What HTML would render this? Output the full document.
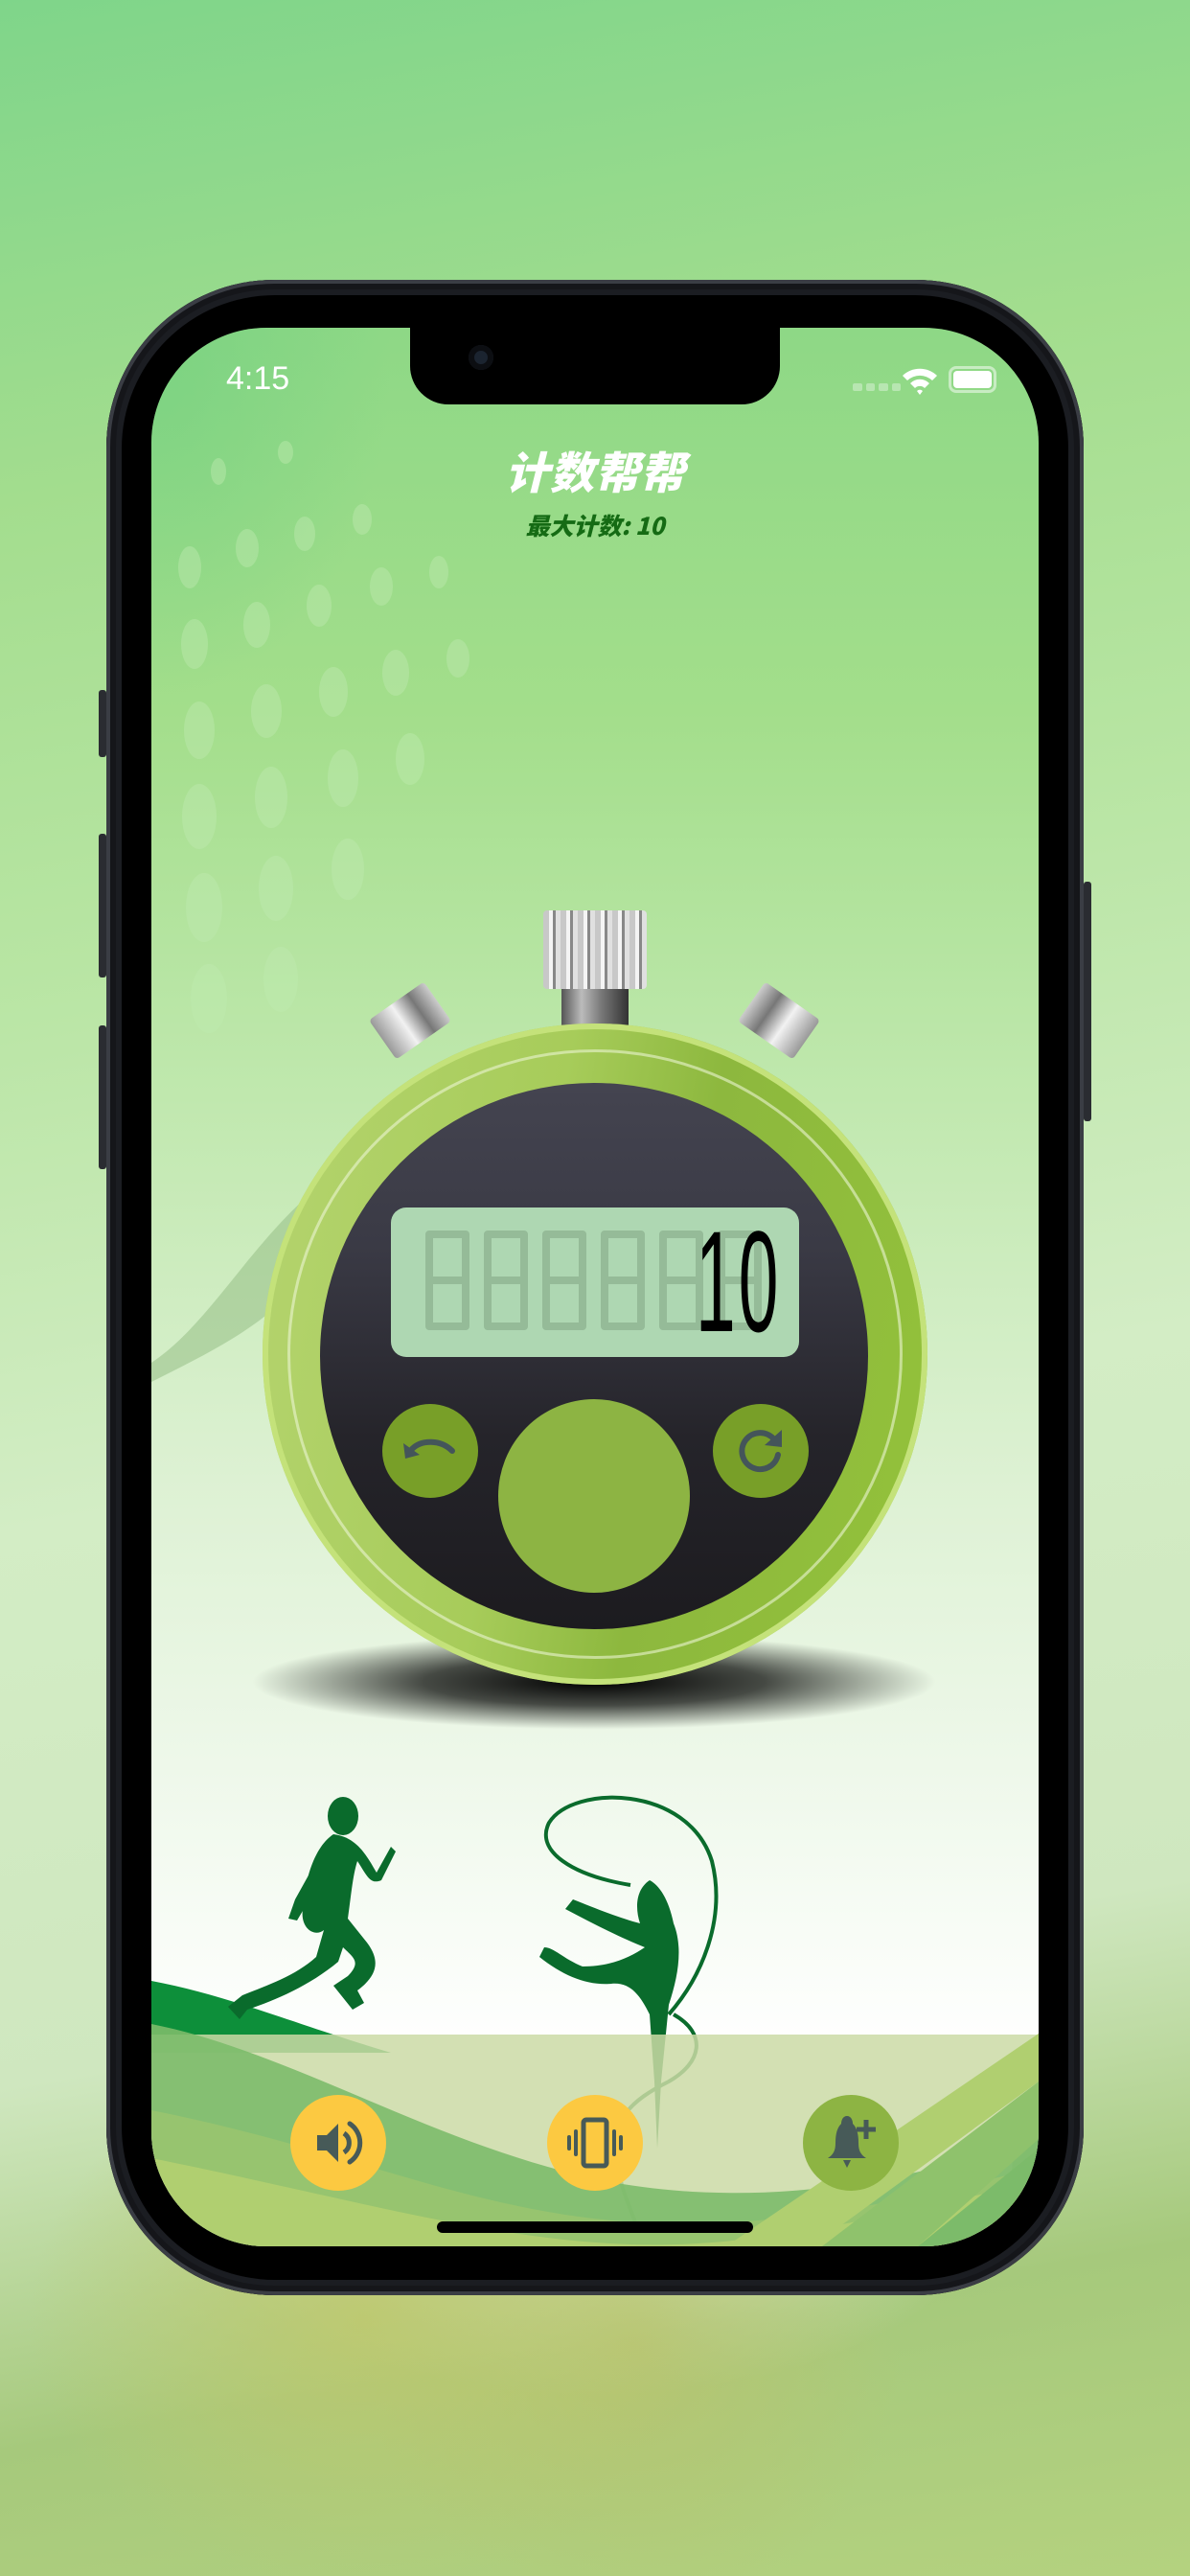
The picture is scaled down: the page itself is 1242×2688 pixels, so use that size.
<!DOCTYPE html>
<html><head><meta charset="utf-8">
<style>
html,body{margin:0;padding:0}
body{width:1242px;height:2688px;position:relative;overflow:hidden;
background:
radial-gradient(ellipse 500px 400px at 380px 2420px, rgba(190,200,110,.9), transparent 70%),
radial-gradient(ellipse 400px 400px at 660px 2450px, rgba(185,195,110,.8), transparent 70%),
radial-gradient(ellipse 600px 300px at 620px 2290px, rgba(230,240,220,.9), transparent 70%),
linear-gradient(170deg,#7fd58a 0%,#a3dd8e 18%,#b8e5a3 35%,#d3edc5 55%,#cfe7bf 75%,#a6c97c 88%,#b4d27f 100%);
font-family:"Liberation Sans","Noto Sans CJK SC",sans-serif}
.abs{position:absolute}
.phone{left:111px;top:292px;width:1020px;height:2103px;border-radius:175px;background:#1b1d22;box-shadow:inset 0 0 0 4px #3a3d44, inset 0 0 0 10px #15161a}
.bezel{left:127px;top:308px;width:988px;height:2071px;border-radius:160px;background:#000}
.screen{left:158px;top:342px;width:926px;height:2002px;border-radius:120px;overflow:hidden;
background:linear-gradient(180deg,#8ed886 0%,#a3de8b 20%,#c0e8ae 40%,#ddf1d3 60%,#eef8ea 75%,#ffffff 90%)}
.notch{left:270px;top:-2px;width:386px;height:82px;background:#000;border-radius:0 0 40px 40px}
</style></head><body>
<div class="abs phone"></div>
<div class="abs" style="left:103px;top:720px;width:8px;height:70px;background:#2a2c31;border-radius:3px"></div>
<div class="abs" style="left:103px;top:870px;width:8px;height:150px;background:#2a2c31;border-radius:3px"></div>
<div class="abs" style="left:103px;top:1070px;width:8px;height:150px;background:#2a2c31;border-radius:3px"></div>
<div class="abs" style="left:1131px;top:920px;width:8px;height:250px;background:#2a2c31;border-radius:3px"></div>
<div class="abs bezel"></div>
<div class="abs screen">
 <svg class="abs" style="left:0;top:0" width="926" height="2002">
  <defs>
   <radialGradient id="dots" cx="0" cy="0.05" r="0.5"><stop offset="0" stop-color="#6fcf7f" stop-opacity=".6"/><stop offset="1" stop-color="#6fcf7f" stop-opacity="0"/></radialGradient>
  </defs>
  <rect width="500" height="700" fill="url(#dots)"/>
  <g fill="#bfeab0" opacity=".45">
   <ellipse cx="40" cy="250" rx="12" ry="22"/><ellipse cx="100" cy="230" rx="12" ry="20"/><ellipse cx="160" cy="215" rx="11" ry="18"/><ellipse cx="220" cy="200" rx="10" ry="16"/>
   <ellipse cx="45" cy="330" rx="14" ry="26"/><ellipse cx="110" cy="310" rx="14" ry="24"/><ellipse cx="175" cy="290" rx="13" ry="22"/><ellipse cx="240" cy="270" rx="12" ry="20"/><ellipse cx="300" cy="255" rx="10" ry="17"/>
   <ellipse cx="50" cy="420" rx="16" ry="30"/><ellipse cx="120" cy="400" rx="16" ry="28"/><ellipse cx="190" cy="380" rx="15" ry="26"/><ellipse cx="255" cy="360" rx="14" ry="24"/><ellipse cx="320" cy="345" rx="12" ry="20"/>
   <ellipse cx="50" cy="510" rx="18" ry="34"/><ellipse cx="125" cy="490" rx="17" ry="32"/><ellipse cx="200" cy="470" rx="16" ry="30"/><ellipse cx="270" cy="450" rx="15" ry="27"/>
   <ellipse cx="55" cy="605" rx="19" ry="36"/><ellipse cx="130" cy="585" rx="18" ry="34"/><ellipse cx="205" cy="565" rx="17" ry="32"/>
   <ellipse cx="60" cy="700" rx="19" ry="36"/><ellipse cx="135" cy="680" rx="18" ry="34"/><ellipse cx="70" cy="150" rx="8" ry="14"/><ellipse cx="140" cy="130" rx="8" ry="12"/>
  </g>
  <path d="M0 1080 C60 1040 100 960 170 900 C200 880 230 870 250 880 C210 900 180 950 150 1000 C120 1040 60 1070 0 1100Z" fill="#8fb980" opacity=".5"/>
  <path d="M0 1725 C80 1740 150 1770 250 1800 L0 1800Z" fill="#0d8f3a"/>
  <!-- runner -->
  <g fill="#0a6b2c">
   <ellipse cx="200" cy="1553" rx="16" ry="20"/>
   <path d="M190 1572 C170 1585 160 1620 158 1650 C155 1670 170 1680 180 1672 L172 1700 C150 1720 120 1730 95 1740 L80 1752 L92 1765 L100 1755 C130 1745 165 1730 195 1705 L200 1690 C210 1700 220 1705 205 1720 L190 1730 L210 1755 L222 1748 L215 1735 C235 1720 240 1705 225 1685 L205 1660 C208 1640 210 1615 215 1600 C225 1615 228 1625 240 1620 L255 1590 L250 1585 L235 1612 C225 1595 215 1575 190 1572Z"/>
   <path d="M175 1595 L150 1640 L143 1660 L152 1662 L165 1640 L185 1610Z"/>
  </g>
  <!-- gymnast -->
  <g fill="none" stroke="#0a6b2c" stroke-width="4">
   <path d="M500 1625 C440 1615 400 1590 415 1560 C440 1520 560 1520 585 1600 C600 1660 575 1720 540 1760"/>
   <path d="M545 1760 C580 1780 575 1810 540 1830 C500 1850 480 1870 485 1910 C490 1950 510 1980 515 2010"/>
  </g>
  <path d="M520 1620 C505 1630 505 1650 510 1665 C490 1660 460 1648 440 1640 L432 1650 C460 1665 490 1680 515 1690 C500 1700 480 1710 450 1710 C430 1702 420 1690 410 1690 L405 1700 C430 1720 455 1730 480 1728 C500 1726 510 1740 520 1760 L525 1830 L528 1900 L532 1830 L540 1750 C550 1720 555 1690 545 1665 C540 1640 530 1625 520 1620Z" fill="#0a6b2c"/>
  <path d="M900 1900 C880 1880 910 1860 926 1860 L926 2010 L890 2010 Z" fill="#0a6b2c"/>
  <!-- bottom panel -->
  <rect x="0" y="1781" width="926" height="221" fill="#cbdba6" opacity=".85"/>
  <path d="M0 1770 C150 1800 300 1900 480 1935 C650 1965 800 1930 926 1890 L926 2002 L0 2002Z" fill="#7cbb6a" opacity=".9"/>
  <path d="M0 1860 C200 1900 320 1960 480 1975 C650 1990 800 1950 926 1920 L926 2002 L0 2002Z" fill="#97c46f"/>
  <path d="M0 1910 C200 1950 350 1995 500 2000 C650 2005 800 1960 926 1935 L926 2002 L0 2002Z" fill="#b0cf70"/>
  <path d="M0 1990 C200 2020 350 2060 500 2065 C680 2060 820 2010 926 1980 L926 2002 L0 2002Z" fill="#bedb82"/>
  <path d="M600 2002 L926 1780 L926 1830 L690 2002Z" fill="#b0cf70"/>
  <path d="M700 2002 L926 1830 L926 1890 L800 2002Z" fill="#8fc26c"/>
  <path d="M800 2002 L926 1900 L926 1960 L860 2002Z" fill="#7cbb6a"/>
  <path d="M860 2002 L926 1960 L926 2002Z" fill="#cbdba6"/>
 </svg>
 <div class="abs notch"></div>
 <div class="abs" style="left:331px;top:18px;width:26px;height:26px;border-radius:50%;background:#1b2430;box-shadow:inset 0 0 0 6px #0c0e12"></div>
 <div class="abs" style="left:78px;top:34px;color:#fff;font-size:34px">4:15</div>
 <div class="abs" style="left:732px;top:58px;width:50px;height:8px;display:flex;gap:4px"><i style="flex:1;background:rgba(255,255,255,.35);border-radius:2px"></i><i style="flex:1;background:rgba(255,255,255,.35);border-radius:2px"></i><i style="flex:1;background:rgba(255,255,255,.35);border-radius:2px"></i><i style="flex:1;background:rgba(255,255,255,.35);border-radius:2px"></i></div>
 <svg class="abs" style="left:782px;top:40px" width="40" height="30" viewBox="0 0 40 30"><path d="M2 10 A26 26 0 0 1 38 10 L33 15 A19 19 0 0 0 7 15Z M10 18 A14 14 0 0 1 30 18 L25 23 A7 7 0 0 0 15 23Z M17 26 L20 30 L23 26 A4 4 0 0 0 17 26Z" fill="#fff"/></svg>
 <div class="abs" style="left:832px;top:40px;width:44px;height:22px;border:3px solid rgba(255,255,255,.5);border-radius:8px"><div style="margin:2px;height:18px;background:#fff;border-radius:4px"></div></div>
 <div class="abs" style="left:0;width:926px;top:116px;text-align:center;color:#fff;font-size:46px;font-weight:900;font-style:italic;font-family:'Noto Sans CJK SC',sans-serif;letter-spacing:1px">计数帮帮</div>
 <div class="abs" style="left:0;width:926px;top:188px;text-align:center;color:#156b14;font-size:25px;font-weight:900;font-style:italic;font-family:'Noto Sans CJK SC',sans-serif">最大计数: 10</div>
</div>

<!-- stopwatch -->
<div class="abs" style="left:260px;top:1705px;width:720px;height:100px;border-radius:50%;background:radial-gradient(ellipse at center,#000 0%,rgba(0,0,0,.7) 35%,rgba(0,0,0,0) 70%)"></div>
<div class="abs" style="left:586px;top:1025px;width:70px;height:45px;background:linear-gradient(90deg,#555,#bbb 30%,#777 60%,#333);"></div>
<div class="abs" style="left:567px;top:950px;width:108px;height:82px;background:repeating-linear-gradient(90deg,#c8c8c8 0 6px,#f4f4f4 6px 10px,#888 10px 13px,#e0e0e0 13px 18px);border-radius:4px"></div>
<div class="abs" style="left:393px;top:1040px;width:70px;height:50px;transform:rotate(-35deg);background:linear-gradient(90deg,#999,#f2f2f2 40%,#777 70%,#ccc);border-radius:4px"></div>
<div class="abs" style="left:778px;top:1040px;width:70px;height:50px;transform:rotate(35deg);background:linear-gradient(90deg,#ccc,#777 30%,#f2f2f2 60%,#999);border-radius:4px"></div>
<div class="abs" style="left:274px;top:1068px;width:694px;height:690px;border-radius:50%;background:linear-gradient(100deg,#b5d46f 0%,#a7cc5a 40%,#8db83e 60%,#93c23a 100%);box-shadow:inset 0 0 0 6px #c4e27a"></div>
<div class="abs" style="left:300px;top:1095px;width:642px;height:636px;border-radius:50%;border:3px solid rgba(235,245,210,.6);box-sizing:border-box"></div>
<div class="abs" style="left:334px;top:1130px;width:572px;height:570px;border-radius:50%;background:linear-gradient(180deg,#444450 0%,#3a3a45 30%,#25242a 65%,#1c1b1f 100%)"></div>
<div class="abs" style="left:408px;top:1260px;width:426px;height:156px;border-radius:16px;background:#aed7b2;overflow:hidden">
 <svg class="abs" style="left:0;top:0" width="426" height="156">
  <g fill="none" stroke="#95bb98" stroke-width="8" stroke-linejoin="round">
   <path d="M40 28 h38 v48 h-38z M40 76 v48 h38 v-48"/>
   <path d="M101 28 h38 v48 h-38z M101 76 v48 h38 v-48"/>
   <path d="M162 28 h38 v48 h-38z M162 76 v48 h38 v-48"/>
   <path d="M223 28 h38 v48 h-38z M223 76 v48 h38 v-48"/>
   <path d="M284 28 h38 v48 h-38z M284 76 v48 h38 v-48"/>
   <path d="M345 28 h38 v48 h-38z M345 76 v48 h38 v-48"/>
  </g>
 </svg>
 <div class="abs" style="left:318px;top:2px;font-family:'Liberation Sans',sans-serif;font-size:150px;line-height:150px;color:#000;transform:scaleX(.5);transform-origin:0 0;letter-spacing:6px">10</div>
</div>
<div class="abs" style="left:399px;top:1465px;width:100px;height:98px;border-radius:50%;background:#789f28"></div>
<svg class="abs" style="left:418px;top:1490px" width="62" height="40" viewBox="0 0 62 40"><path d="M12 22 C22 12 42 12 54 24" fill="none" stroke="#44555a" stroke-width="6" stroke-linecap="round"/><path d="M3 16 L5 32 L20 28Z" fill="#44555a"/></svg>
<div class="abs" style="left:744px;top:1465px;width:100px;height:98px;border-radius:50%;background:#789f28"></div>
<svg class="abs" style="left:768px;top:1488px" width="52" height="52" viewBox="0 0 52 52"><path d="M44 30 A19 19 0 1 1 40 14" fill="none" stroke="#44555a" stroke-width="6" stroke-linecap="round"/><path d="M48 4 L48 22 L30 20Z" fill="#44555a"/></svg>
<div class="abs" style="left:520px;top:1460px;width:200px;height:202px;border-radius:50%;background:#8db443"></div>

<div class="abs" style="left:303px;top:2186px;width:100px;height:100px;border-radius:50%;background:#fcc941"></div>
<svg class="abs" style="left:323px;top:2206px" width="60" height="60" viewBox="0 0 60 60"><path d="M8 22 H18 L30 10 V50 L18 38 H8Z" fill="#475a58"/><path d="M36 20 A12 12 0 0 1 36 40" fill="none" stroke="#475a58" stroke-width="5"/><path d="M42 10 A24 24 0 0 1 42 50" fill="none" stroke="#475a58" stroke-width="5" stroke-linecap="round"/></svg>
<div class="abs" style="left:571px;top:2186px;width:100px;height:100px;border-radius:50%;background:#fcc941"></div>
<svg class="abs" style="left:591px;top:2206px" width="60" height="60" viewBox="0 0 60 60"><rect x="18" y="6" width="24" height="48" rx="3" fill="none" stroke="#475a58" stroke-width="5"/><path d="M10 18 V42 M50 18 V42 M3 24 V36 M57 24 V36" stroke="#475a58" stroke-width="4" stroke-linecap="round"/></svg>
<div class="abs" style="left:838px;top:2186px;width:100px;height:100px;border-radius:50%;background:#8db443"></div>
<svg class="abs" style="left:858px;top:2204px" width="60" height="64" viewBox="0 0 60 64"><path d="M26 4 C30 4 32 8 32 12 C36 16 38 22 38 32 C38 40 40 44 46 48 H6 C12 44 14 40 14 32 C14 22 16 16 20 12 C20 8 22 4 26 4Z" fill="#475a58"/><path d="M22 50 H30 L26 58Z" fill="#475a58"/><path d="M46 8 V28 M36 18 H56" stroke="#475a58" stroke-width="5"/></svg>
<div class="abs" style="left:456px;top:2318px;width:330px;height:12px;border-radius:6px;background:#000"></div>
</body></html>
